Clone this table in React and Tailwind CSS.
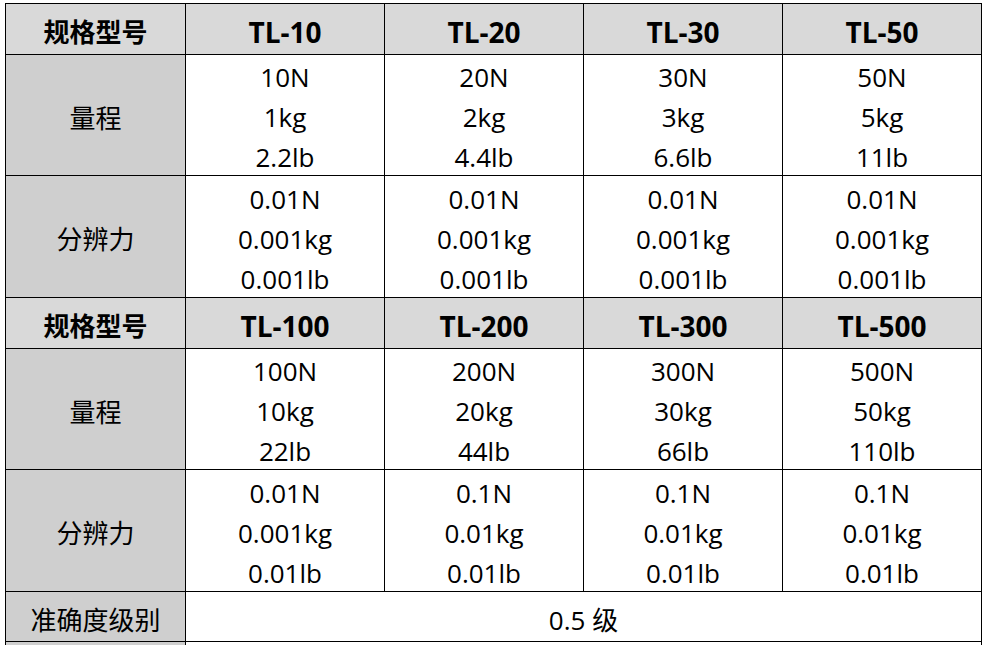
import React from 'react';

const blocks = [
  {
    models: ['TL-10', 'TL-20', 'TL-30', 'TL-50'],
    range: [
      ['10N', '1kg', '2.2lb'],
      ['20N', '2kg', '4.4lb'],
      ['30N', '3kg', '6.6lb'],
      ['50N', '5kg', '11lb'],
    ],
    resolution: [
      ['0.01N', '0.001kg', '0.001lb'],
      ['0.01N', '0.001kg', '0.001lb'],
      ['0.01N', '0.001kg', '0.001lb'],
      ['0.01N', '0.001kg', '0.001lb'],
    ],
  },
  {
    models: ['TL-100', 'TL-200', 'TL-300', 'TL-500'],
    range: [
      ['100N', '10kg', '22lb'],
      ['200N', '20kg', '44lb'],
      ['300N', '30kg', '66lb'],
      ['500N', '50kg', '110lb'],
    ],
    resolution: [
      ['0.01N', '0.001kg', '0.01lb'],
      ['0.1N', '0.01kg', '0.01lb'],
      ['0.1N', '0.01kg', '0.01lb'],
      ['0.1N', '0.01kg', '0.01lb'],
    ],
  },
];

const cell = 'border border-black text-center align-middle p-0';

const Lines = ({ items }) => (
  <div className="flex flex-col items-center translate-y-[2px]">
    {items.map((t, i) => (
      <span key={i} className="leading-[40px]">{t}</span>
    ))}
  </div>
);

const App = () => {
  return (
    <div
      className="h-[645px] overflow-hidden bg-white pl-[5px] pt-[3px] text-[26px] text-black"
      style={{ fontFamily: '"Open Sans", "Noto Sans CJK SC", sans-serif' }}
    >
      <table className="table-fixed border-collapse w-[976px]">
        <colgroup>
          <col className="w-[180px]" />
          <col className="w-[199px]" />
          <col className="w-[199px]" />
          <col className="w-[199px]" />
          <col className="w-[199px]" />
        </colgroup>
        <tbody>
          {blocks.map((b, bi) => (
            <React.Fragment key={bi}>
              <tr className="h-[51px] bg-[#d9d9d9] font-bold">
                <td className={`${cell} pt-[6px] leading-[38px]`}>规格型号</td>
                {b.models.map((m) => (
                  <td key={m} className={`${cell} pt-[6px] text-[28px] leading-[38px]`}>{m}</td>
                ))}
              </tr>
              <tr className="h-[121px]">
                <td className={`${cell} bg-[#cfcfcf] pt-[6px]`}>量程</td>
                {b.range.map((r, i) => (
                  <td key={i} className={cell}><Lines items={r} /></td>
                ))}
              </tr>
              <tr className="h-[122px]">
                <td className={`${cell} bg-[#cfcfcf] pt-[6px]`}>分辨力</td>
                {b.resolution.map((r, i) => (
                  <td key={i} className={cell}><Lines items={r} /></td>
                ))}
              </tr>
            </React.Fragment>
          ))}
          <tr className="h-[50px]">
            <td className={`${cell} bg-[#cfcfcf] pt-[6px] leading-[38px]`}>准确度级别</td>
            <td colSpan={4} className={`${cell} pt-[6px] leading-[38px]`}>0.5 级</td>
          </tr>
          <tr className="h-[50px]">
            <td className={`${cell} bg-[#cfcfcf]`}></td>
            <td colSpan={4} className={cell}></td>
          </tr>
        </tbody>
      </table>
    </div>
  );
};

export default App;
